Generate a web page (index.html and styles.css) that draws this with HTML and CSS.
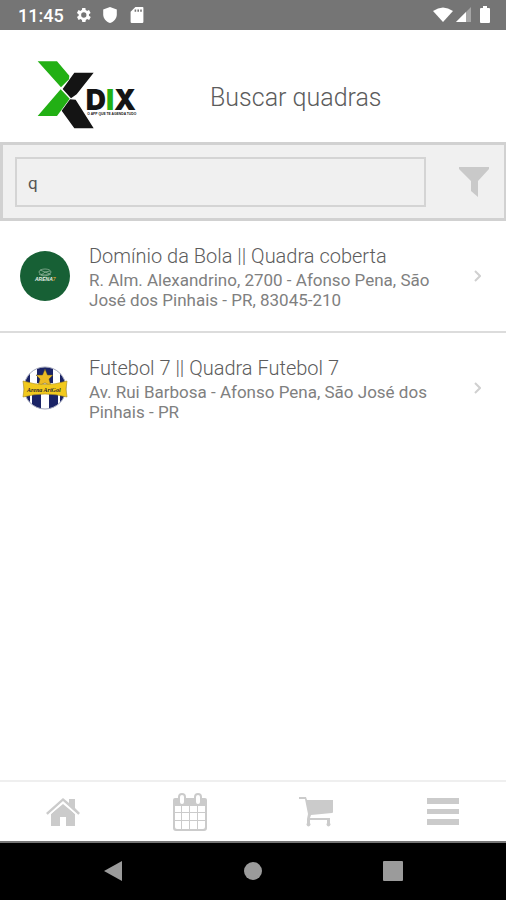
FILE: index.html
```html
<!DOCTYPE html>
<html lang="pt-BR">
<head>
<meta charset="utf-8">
<meta name="viewport" content="width=device-width, initial-scale=1">
<title>Buscar quadras</title>
<link rel="stylesheet" href="styles.css">
</head>
<body>
<div class="status">
  <div class="status-group">
    <time class="clock">11:45</time>
    <svg class="status-icon" viewBox="2 2 20 20"><path fill-rule="evenodd" d="M19.400 13a7.500 7.500 0 0 0 0-2l2.100-1.600-2-3.500-2.500 1a7.700 7.700 0 0 0-1.700-1L15 3.200h-4l-.4 2.700a7.700 7.700 0 0 0-1.700 1l-2.500-1-2 3.500L6.600 11a7.500 7.500 0 0 0 0 2l-2.100 1.600 2 3.500 2.500-1c.5.400 1.100.700 1.700 1l.4 2.700h4l.4-2.700c.6-.3 1.200-.6 1.700-1l2.500 1 2-3.500zM13 8.700a3.300 3.300 0 1 1 0 6.600 3.300 3.300 0 0 1 0-6.600z"/></svg>
    <svg class="status-icon" viewBox="2 2 20 20"><path d="M12 2 3.500 5v6c0 5 3.500 9.500 8.500 11 5-1.500 8.500-6 8.500-11V5z"/></svg>
    <svg class="status-icon" viewBox="2 2 20 20"><path fill-rule="evenodd" d="M19 2h-9L4 8v12.500A1.500 1.500 0 0 0 5.500 22h13a1.500 1.500 0 0 0 1.500-1.500V3a1 1 0 0 0-1-1zM9 5h2v3H9zm3.500 0h2v3h-2zM16 5h2v3h-2z"/></svg>
  </div>
  <div class="status-group signals">
    <svg width="20" height="16" viewBox="0 0 20 16"><path d="M0 4Q10-3 20 4L10 15z"/></svg>
    <svg width="16" height="16" viewBox="0 0 16 16"><path d="M0 15 15 0v15z" opacity=".35"/><path d="M0 15 10 5v10z"/></svg>
    <svg width="12" height="18" viewBox="0 0 12 18"><path d="M4 0h4v2h2a1 1 0 0 1 1 1v13a1 1 0 0 1-1 1H2a1 1 0 0 1-1-1V3a1 1 0 0 1 1-1h2z"/></svg>
  </div>
</div>

<header class="header">
  <svg class="logo" viewBox="36 30 306 210" role="img" aria-label="X DIX">
    <path fill="#22b014" d="M38 34h58l37 43-1 11-24 24zM107 118l27 28-38 52H38z"/>
    <path fill="#141414" d="M148 68h58l-51 65-17 12-25-28zM110 182l25-34 17 1 54 86h-58z"/>
    <text class="logo-name" x="182" y="179" fill="#141414">D<tspan fill="#22b014">I</tspan>X</text>
    <text class="logo-tag" x="187" y="194" fill="#141414">O APP QUE TE AGENDA TUDO</text>
  </svg>
  <h1 class="title">Buscar quadras</h1>
</header>

<main class="main">
  <form class="search">
    <input class="search-input" type="text" value="q" aria-label="Buscar">
    <button class="filter" type="button" aria-label="Filtrar">
      <svg width="30" height="30" viewBox="0 0 30 30"><path d="M0 0h30v2L19 14v16l-7-6V14L0 2z"/></svg>
    </button>
  </form>

  <ul class="list">
    <li>
      <a class="row" href="#">
        <svg class="avatar" viewBox="0 0 50 50">
          <circle cx="25" cy="25" r="25" fill="#176035"/>
          <g fill="none" stroke="#9dbba5" stroke-width=".7"><ellipse cx="25" cy="21" rx="6" ry="3"/><path d="m20 19 10 4M21 24q4-4 9-4M19 23q5 4 12 0"/></g>
          <text class="arena" x="15" y="30" fill="#e8f0e8">ARENA<tspan fill="#d39a35">7</tspan></text>
        </svg>
        <span class="info"><span class="name">Domínio da Bola || Quadra coberta</span><span class="address">R. Alm. Alexandrino, 2700 - Afonso Pena, São José dos Pinhais - PR, 83045-210</span></span>
        <svg class="chevron" viewBox="0 0 8 12"><path d="m2 1 5 5-5 5"/></svg>
      </a>
    </li>
    <li>
      <a class="row" href="#">
        <svg class="avatar" viewBox="0 0 50 50">
          <defs><clipPath id="ball"><circle cx="25" cy="25" r="21"/></clipPath></defs>
          <circle cx="25" cy="25" r="21" fill="#fff"/>
          <path clip-path="url(#ball)" fill="#1b2466" d="M17 4h16v16H17zM4 10h6v30H4zM40 10h6v30h-6zM12 29h9v17h-9zM29 29h9v17h-9z"/>
          <circle cx="25" cy="25" r="21" fill="none" stroke="#a2a6bb"/>
          <path fill="#edbb24" stroke="#4d4830" stroke-width=".5" d="m25 6 2.500 6H33l-4 4 2 7-6-3-7 3 2-7-4-4h6.500z"/>
          <path fill="#f2c91e" stroke="#a68920" stroke-width=".6" d="M3 18q22 7 44 0l-1 8 1 8q-22-6-44 0l1-8z"/>
          <text class="crest" x="7" y="29" fill="#28262a">Arena ArtGol</text>
        </svg>
        <span class="info"><span class="name">Futebol 7 || Quadra Futebol 7</span><span class="address">Av. Rui Barbosa - Afonso Pena, São José dos Pinhais - PR</span></span>
        <svg class="chevron" viewBox="0 0 8 12"><path d="m2 1 5 5-5 5"/></svg>
      </a>
    </li>
  </ul>
</main>

<nav class="tabs" aria-label="Principal">
  <a class="tab" href="#" aria-label="Início"><svg width="34" height="38" viewBox="0 0 34 38"><path d="M17 10 29 21v12H20v-9h-6v9H5V21z"/><path d="M17 5 0 20l2 2L17 9l15 13 2-2-5-5V6h-6v4z"/><path class="ring" d="M17 8 2 21.500l1 1L17 11l14 11.500 1-1z"/></svg></a>
  <a class="tab" href="#" aria-label="Agenda"><svg width="36" height="38" viewBox="0 0 36 38"><path fill-rule="evenodd" d="M3 5h3V4a4 4 0 0 1 8 0v1h8V4a4 4 0 0 1 8 0v1h3a2 2 0 0 1 2 2v28a3 3 0 0 1-3 3H4a3 3 0 0 1-3-3V7a2 2 0 0 1 2-2zm0 8v6h6v-6zm7 0v6h7v-6zm8 0v6h7v-6zm8 0v6h7v-6zM3 20v7h6v-7zm7 0v7h7v-7zm8 0v7h7v-7zm8 0v7h7v-7zM3 28v6q0 2 2 2h4v-8zm7 0v8h7v-8zm8 0v8h7v-8zm8 0v8h5q2 0 2-2v-6z"/><path class="ring" d="M8 4a2 2 0 0 1 4 0v5a2 2 0 0 1-4 0zM24 4a2 2 0 0 1 4 0v5a2 2 0 0 1-4 0z"/></svg></a>
  <a class="tab" href="#" aria-label="Carrinho"><svg width="34" height="38" viewBox="0 0 34 38"><path d="M0 4h7l1 3h26v12q0 1-1 1l-21 2-1 3h20v5a2 2 0 1 1-3 0v-3H11v3a2 2 0 1 1-3 0v-4l1-5L6 6H0z"/></svg></a>
  <a class="tab" href="#" aria-label="Menu"><svg width="32" height="38" viewBox="0 0 32 38"><path d="M0 5h32v6H0zM0 16h32v5H0zM0 26h32v6H0z"/></svg></a>
</nav>

<div class="system">
  <button type="button" aria-label="Voltar"><svg width="20" height="20" viewBox="0 0 20 20"><path d="M19 0v20L1 10z"/></svg></button>
  <button type="button" aria-label="Tela inicial"><svg width="20" height="20" viewBox="0 0 20 20"><circle cx="10" cy="10" r="9"/></svg></button>
  <button type="button" aria-label="Recentes"><svg width="20" height="20" viewBox="0 0 20 20"><rect width="20" height="20" rx="1"/></svg></button>
</div>
</body>
</html>
```
FILE: styles.css
```css
* {
  box-sizing: border-box;
}

body {
  margin: 0;
  min-height: 100vh;
  display: flex;
  flex-direction: column;
  background: #fff;
  color: #808080;
  font-family: Roboto, "Liberation Sans", sans-serif;
}

svg {
  display: block;
  flex: none;
}

a {
  color: inherit;
  text-decoration: none;
}

button {
  border: 0;
  padding: 0;
  background: none;
}

.status {
  height: 30px;
  padding: 0 15px 0 18px;
  display: flex;
  justify-content: space-between;
  align-items: center;
  background: #757575;
  color: #fff;
  fill: #fff;
}

.status-group {
  display: flex;
  align-items: center;
  gap: 11px;
}

.signals {
  gap: 3px;
}

.signals svg:last-child {
  margin-left: 4px;
}

.clock {
  font-size: 18px;
  font-weight: 500;
}

.status-icon {
  width: 16px;
  height: 16px;
}

.header {
  height: 112px;
  padding: 0 37px;
  display: grid;
  grid-template-columns: 102px 1fr 102px;
  align-items: center;
}

.logo {
  width: 102px;
  height: 70px;
  margin-top: 30px;
  align-self: start;
}

.logo-name {
  font: 900 84px Inter, sans-serif;
}

.logo-tag {
  font: 700 10px "Liberation Sans", sans-serif;
}

.title {
  margin: 0;
  padding-left: 71px;
  padding-top: 24px;
  color: #5c5c5c;
  font-size: 25px;
  font-weight: 300;
  line-height: 30px;
  white-space: nowrap;
}

.main {
  flex: 1;
}

.search {
  height: 79px;
  display: flex;
  align-items: center;
  padding: 0 15px 0 12px;
  border: 3px solid #d1d1d1;
  border-right-width: 2px;
  background: #f0f0f0;
}

.search-input {
  flex: 1;
  min-width: 0;
  height: 50px;
  padding: 2px 11px 0;
  border: 2px solid #d4d4d4;
  border-radius: 0;
  background: #f0f0f0;
  color: #555;
  font: 17px Roboto, sans-serif;
  outline: 0;
}

.filter {
  margin-left: 33px;
  fill: #c9c9c9;
}

.list {
  list-style: none;
  margin: 0;
  padding: 0;
}

.list li + li {
  border-top: 2px solid #dcdcdc;
}

.row {
  display: flex;
  align-items: center;
  min-height: 110px;
  padding: 0 25px 0 20px;
}

.avatar {
  width: 50px;
  height: 50px;
}

.info {
  flex: 1;
  margin: 0 30px 0 19px;
}

.name,
.address {
  display: block;
}

.name {
  color: #5c5c5c;
  font-size: 20px;
  font-weight: 300;
  line-height: 28px;
}

.address {
  font-size: 17px;
  line-height: 20px;
}

.chevron {
  width: 8px;
  height: 12px;
  fill: none;
  stroke: #d0d0d0;
  stroke-width: 2;
}

.arena {
  font: italic 700 5px "Liberation Sans", sans-serif;
}

.crest {
  font: italic 700 6px "Liberation Serif", serif;
}

.tabs {
  height: 61px;
  display: grid;
  grid-template-columns: repeat(4, 1fr);
  border-top: 2px solid #efefef;
}

.tab {
  display: grid;
  place-items: center;
  fill: #cbcbcb;
}

.ring {
  fill: #fff;
}

.system {
  height: 59px;
  display: flex;
  justify-content: center;
  gap: 120px;
  padding-bottom: 2px;
  border-top: 2px solid #777;
  background: #000;
  fill: #9b9b9b;
}
```
